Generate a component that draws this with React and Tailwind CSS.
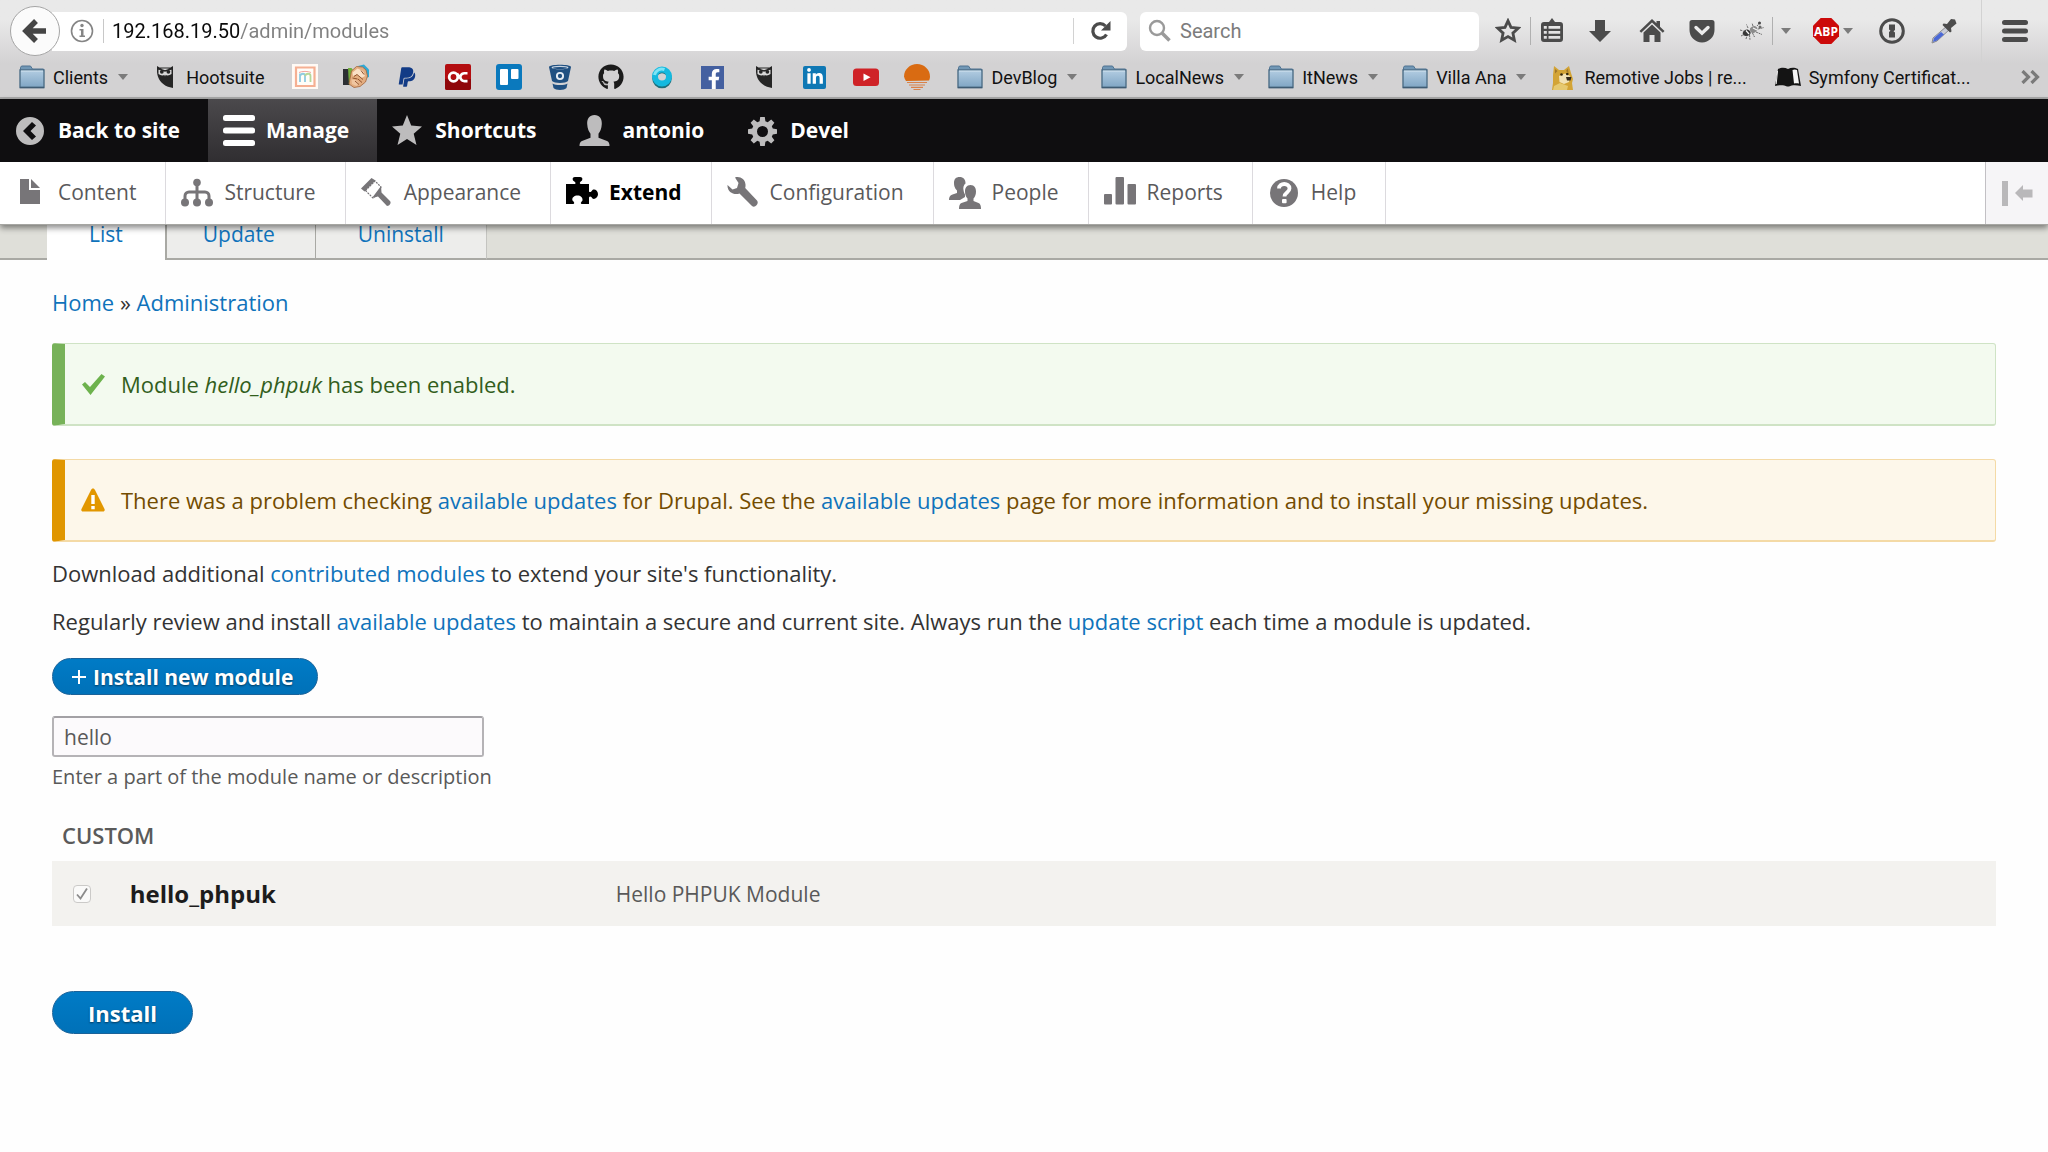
import React from "react";
import { FaGithub, FaPaypal, FaFacebookF, FaLinkedinIn } from "react-icons/fa";

/* ---------- small drawing helpers ---------- */

function Svg({ size = 26, box = 26, className = "", children }) {
  return (
    <svg
      width={size}
      height={size}
      viewBox={`0 0 ${box} ${box}`}
      fill="currentColor"
      aria-hidden="true"
      className={`block shrink-0 ${className}`}
    >
      {children}
    </svg>
  );
}

function Caret() {
  return (
    <svg width="10" height="6" viewBox="0 0 10 6" aria-hidden="true" className="block shrink-0">
      <path d="M0 0h10L5 6z" fill="#7b7b7b" />
    </svg>
  );
}

function Separator() {
  return <span className="h-7 w-px shrink-0 bg-[#b0b0b0]" />;
}

/* ---------- bookmark icons ---------- */

function Folder() {
  return (
    <Svg>
      <defs>
        <linearGradient id="folder" x1="0" y1="0" x2="0" y2="1">
          <stop offset="0" stopColor="#b3cde2" />
          <stop offset="1" stopColor="#7fa5c4" />
        </linearGradient>
      </defs>
      <path d="M1.500 6V3.500l1-1.500h9l2 3h11v6h-23z" fill="#7197b5" stroke="#4f7391" strokeWidth="1" />
      <path d="M1 6h24v17.500H1z" fill="url(#folder)" stroke="#4f6f88" strokeWidth="1.4" />
      <path d="M2 7h22" stroke="#d3e4f0" strokeWidth="1" />
      <path d="M1 23.500h24" stroke="#3f5c74" strokeWidth="1.4" />
    </Svg>
  );
}

function Owl() {
  return (
    <Svg>
      <path d="M5 2l2.500 1.500h11L21 2v22l-5-1.200C9.500 20 5.500 15 5 8z" fill="#262626" />
      <path d="M6.500 5.500c2-1.500 11-1.500 13 0v4.500c-2 1.500-4.500 2-6.500.500-2 1.500-4.500 1-6.500-.500z" fill="#d9d9d9" />
      <circle cx="9.800" cy="7.800" r="1.900" fill="#262626" />
      <circle cx="16.400" cy="7.800" r="1.900" fill="#262626" />
      <path d="M5.500 4.500l7.500 2.500 7.500-2.500" stroke="#262626" strokeWidth="1.500" fill="none" />
      <path d="M12 10l1 2.500 1-2.500z" fill="#d9d9d9" />
    </Svg>
  );
}

function MIcon() {
  return (
    <Svg>
      <path d="M0 0h26v25H0z" fill="#fffaf5" />
      <path d="M4 3.500h18.500v18.500H4z" fill="#fffdf8" stroke="#f5b093" strokeWidth="2.200" />
      <path d="M8 18V9.500M8 12c1-3 5-3 5 0v6" stroke="#8fcbe0" strokeWidth="1.800" fill="none" />
      <path d="M13 12c1-3 5.500-3 5.500 0v6" stroke="#b5d79b" strokeWidth="1.800" fill="none" />
      <path d="M7 8.500c3-1.500 9-1.500 12 0" stroke="#f3a6a0" strokeWidth="1" fill="none" />
    </Svg>
  );
}

function Handshake() {
  return (
    <Svg>
      <path d="M0 5h7v16H0z" fill="#2c2f33" />
      <path d="M5 4h3.500l1.500 2-1 13-3 2.500z" fill="#6fae3c" />
      <path d="M15 2l6-1.500 5 5V13l-3 1z" fill="#2fa9d6" />
      <path d="M8.500 7l5-4.500 6 .500 3.500 3 1.500 6-2 6-5.500 4.500-6 1-5-3.500z" fill="#e3ad80" stroke="#a2643b" strokeWidth=".800" />
      <path d="M9.500 8.500l5-4 5.500 2.500 2 5-3.500 2-5-3.500-3.500 1.500z" fill="#fae0c6" />
      <path d="M8.500 15.500l4.500.500 3 3-2.500 3-4.500-2z" fill="#f0c6a0" />
      <path
        d="M11 12.500l3-2 6 5M15 15l4 3.500M12 17l4 3.500M9.500 14l5 1M18 6.500l3 4"
        stroke="#91532f"
        strokeWidth="1"
        fill="none"
      />
    </Svg>
  );
}

function OcIcon() {
  return (
    <Svg>
      <rect width="26" height="26" rx="2" fill="#b30d10" />
      <path d="M0 15h26v9a2 2 0 0 1-2 2H2a2 2 0 0 1-2-2z" fill="#8f070a" />
      <circle cx="8.500" cy="13" r="4.300" fill="none" stroke="#fff" strokeWidth="2.800" />
      <path
        d="M22.500 9.200h-3.200a4 4 0 0 0-3.600 2.300 4 4 0 0 0 3.600 5.600h3.200M12 9.500l5 7"
        fill="none"
        stroke="#fff"
        strokeWidth="2.600"
      />
    </Svg>
  );
}

function TrelloIcon() {
  return (
    <Svg>
      <rect width="26" height="26" rx="3" fill="#0a79bd" />
      <rect x="4" y="5" width="8" height="16" rx="1" fill="#fff" />
      <rect x="15" y="5" width="7.500" height="10" rx="1" fill="#fff" />
    </Svg>
  );
}

function BucketIcon() {
  return (
    <Svg>
      <path d="M2 3c0-3 22-3 22 0l-3 14c-2 2.500-14 2.500-16 0z" fill="#205081" />
      <ellipse cx="13" cy="3.500" rx="8.500" ry="1.700" fill="#c7d4e2" />
      <ellipse cx="13" cy="4" rx="7" ry="1.100" fill="#205081" />
      <circle cx="13" cy="12" r="3.100" fill="none" stroke="#e6edf4" strokeWidth="1.900" />
      <path d="M5.500 19.500c3 2 12 2 15 0l-1 4.500c-2 2.500-11 2.500-13 0z" fill="#205081" />
    </Svg>
  );
}

function RingIcon() {
  return (
    <Svg>
      <circle cx="13" cy="14.500" r="7.500" fill="none" stroke="#1c6f7c" strokeWidth="4.500" />
      <circle cx="13" cy="12.500" r="7" fill="none" stroke="#14b9df" strokeWidth="6" />
      <path d="M5.500 11a7.500 7.500 0 0 1 10-5.500" fill="none" stroke="#7ee4f5" strokeWidth="3" />
    </Svg>
  );
}

function FacebookIcon() {
  return (
    <span className="flex h-[23px] w-[23px] items-end justify-end bg-[#4460a0] text-white">
      <FaFacebookF size={20} className="block" />
    </span>
  );
}

function LinkedinIcon() {
  return (
    <span className="flex h-[23px] w-[23px] items-center justify-center rounded-[2px] bg-[#0f78b4] text-white">
      <FaLinkedinIn size={18} className="block" />
    </span>
  );
}

function VideoIcon() {
  return (
    <Svg>
      <rect x="0" y="4.500" width="26" height="17.500" rx="3.500" fill="#cf2227" />
      <path d="M10.500 9.500l7 3.700-7 3.700z" fill="#fff" />
    </Svg>
  );
}

function SunsetIcon() {
  return (
    <Svg>
      <path d="M2 17A13 13 0 0 1 0 12.500C0 5.500 6 0 13 0s13 5.500 13 12.500c0 1.500-.500 3-1 4z" fill="#d96b12" />
      <path d="M3 18.500h20M5 21h16M7 23.300h12M9.500 25.500h7" stroke="#d9824a" strokeWidth="1.200" />
    </Svg>
  );
}

function DogeIcon() {
  return (
    <Svg>
      <path d="M3 11L4 2l5 4h5l5-4 2 7 2 6-1 4 1 7H2l1-7z" fill="#d3a436" />
      <path d="M9 12l6-2.500 5 2.500-1 6-5 2-4.500-2z" fill="#f2e2b5" />
      <path d="M5 5l2.500 2L5 9.500zM18 4.500L16 7l2.500 2z" fill="#a0772a" />
      <circle cx="11.500" cy="10.500" r="1.300" fill="#33270f" />
      <circle cx="17.300" cy="10" r="1.300" fill="#33270f" />
      <path d="M16 13h5.500l-1 3.500h-3.500z" fill="#332a1c" />
      <path d="M4 22l6-3 8 3-1 4H3z" fill="#e6c970" />
    </Svg>
  );
}

function BookIcon() {
  return (
    <Svg>
      <path d="M3 5c4-2 7-1.500 10 0 3-1.500 6-2 10 0l3 17c-5-1-9-1-12 .500h-2C9 21 5 21 0 22z" fill="#141414" />
      <path d="M17.500 6c1.500-.700 3-.700 4.500 0l2 13.500c-2-.300-3.500-.300-5 0z" fill="#f4f4f4" />
      <path d="M2.500 7L1.200 20" stroke="#f0f0f0" strokeWidth="1" />
    </Svg>
  );
}

/* ---------- browser chrome ---------- */

const siteBookmarks = [
  ["Mautic", <MIcon />],
  ["Deals", <Handshake />],
  ["PayPal", <FaPaypal size={22} className="block text-[#123b86]" />],
  ["OC", <OcIcon />],
  ["Trello", <TrelloIcon />],
  ["Bitbucket", <BucketIcon />],
  ["GitHub", <FaGithub size={26} className="block text-[#1b1b1b]" />],
  ["Ring", <RingIcon />],
  ["Facebook", <FacebookIcon />],
  ["Hootsuite feed", <Owl />],
  ["LinkedIn", <LinkedinIcon />],
  ["YouTube", <VideoIcon />],
  ["Sunset", <SunsetIcon />],
];

const folders = ["DevBlog", "LocalNews", "ItNews", "Villa Ana"];

function FolderButton({ label }) {
  return (
    <button type="button" className="flex items-center">
      <Folder />
      <span className="ml-2 mr-[10px]">{label}</span>
      <Caret />
    </button>
  );
}

function ToolButton({ label, className, children }) {
  return (
    <button
      type="button"
      aria-label={label}
      className={`flex shrink-0 items-center justify-center text-[#4b4b4b] ${className}`}
    >
      {children}
    </button>
  );
}

function NavigationBar() {
  return (
    <div className="flex h-[62px] items-center pl-[10px] pr-5 font-[Roboto,sans-serif] text-xl">
      <button
        type="button"
        aria-label="Back"
        className="relative z-10 flex h-[50px] w-[50px] shrink-0 items-center justify-center rounded-full border border-[#a5a5a5] bg-[#fbfbfb] text-[#454545]"
      >
        <Svg>
          <path d="M14 3L4 13l10 10M5 13h19" fill="none" stroke="currentColor" strokeWidth="5.500" />
        </Svg>
      </button>
      <div className="-ml-2 flex h-[39px] min-w-0 flex-1 items-center rounded-r-md bg-white pl-[18px]">
        <button type="button" aria-label="Site information" className="text-[#858585]">
          <Svg size={24} box={24}>
            <circle cx="12" cy="12" r="10.500" fill="none" stroke="currentColor" strokeWidth="1.600" />
            <circle cx="12" cy="6.500" r="1.700" />
            <path d="M9.500 10h4v6.500H15V18H9.500v-1.500H11v-5H9.500z" />
          </Svg>
        </button>
        <span className="ml-[9px] mr-2 h-6 w-px bg-[#c8c8c8]" />
        <input
          aria-label="Address"
          type="text"
          defaultValue="192.168.19.50/admin/modules"
          className="min-w-0 flex-1 bg-[linear-gradient(to_right,#0a0a0a_128px,#808080_128px)] bg-clip-text text-transparent outline-none"
        />
        <span className="h-[26px] w-px bg-[#d2d2d2]" />
        <button type="button" aria-label="Reload" className="flex w-[53px] justify-center text-[#4b4b4b]">
          <Svg size={22} box={22}>
            <path d="M16.500 14.500A7.300 7.300 0 1 1 15.500 6" fill="none" stroke="currentColor" strokeWidth="3.200" />
            <path d="M20.500 1v9.500H11z" />
          </Svg>
        </button>
      </div>
      <label className="ml-[13px] flex h-[39px] w-[339px] items-center rounded-md bg-white pl-2">
        <Svg size={24} box={24} className="text-[#9a9a9a]">
          <circle cx="9" cy="9" r="7" fill="none" stroke="currentColor" strokeWidth="2.400" />
          <path d="M14 14l7.500 7.500" stroke="currentColor" strokeWidth="3.600" />
        </Svg>
        <input
          type="search"
          aria-label="Search"
          placeholder="Search"
          className="ml-2 min-w-0 flex-1 outline-none placeholder:text-[#7c7c7c]"
        />
      </label>
      <ToolButton label="Bookmark this page" className="ml-4 mr-[9px]">
        <Svg>
          <path
            d="M13 2.800l3 6.600 7.200.800-5.300 4.900 1.500 7.100-6.400-3.600-6.400 3.600 1.500-7.100-5.300-4.900 7.200-.800z"
            fill="none"
            stroke="currentColor"
            strokeWidth="2.800"
          />
        </Svg>
      </ToolButton>
      <Separator />
      <ToolButton label="Library" className="ml-2">
        <Svg>
          <path
            fillRule="evenodd"
            d="M5 4h5l3-4 3 4h5a3 3 0 0 1 3 3v14a3 3 0 0 1-3 3H5a3 3 0 0 1-3-3V7a3 3 0 0 1 3-3zm-.200 4v2.700h3V8zm4.700 0v2.700h11.700V8zm-4.700 5v2.700h3V13zm4.700 0v2.700h11.700V13zm-4.700 5v2.700h3V18zm4.700 0v2.700h11.700V18z"
          />
        </Svg>
      </ToolButton>
      <ToolButton label="Downloads" className="ml-[22px]">
        <Svg>
          <path d="M8 2h10v11h6L13 24 2 13h6z" />
        </Svg>
      </ToolButton>
      <ToolButton label="Home" className="ml-[26px]">
        <Svg>
          <path d="M13 1l4.500 4.300V3H21v5.700l4.500 4.300-1.700 1.700L13 4.500 2.200 14.700.500 13z" />
          <path d="M13 6.500l8.500 8V24h-6v-7h-5v7h-6v-9.500z" />
        </Svg>
      </ToolButton>
      <ToolButton label="Pocket" className="ml-6">
        <Svg>
          <path d="M3 2h20a2.500 2.500 0 0 1 2.500 2.500V12a12.500 12.500 0 0 1-25 0V4.500A2.500 2.500 0 0 1 3 2z" />
          <path d="M7 9.500l6 5.700 6-5.700" fill="none" stroke="#ececec" strokeWidth="3.400" strokeLinecap="round" />
        </Svg>
      </ToolButton>
      <ToolButton label="Firebug" className="ml-6 mr-[7px]">
        <Svg>
          <path d="M4 14c1.500-3 5-3.500 7-1s-1 5-3.500 5S3 17 4 14z" fill="#383838" />
          <path d="M11 10.500c2-3 5.500-3.500 7-1s-1.500 5-3.500 5.500-4-2-3.500-4.500z" fill="#8b8b8b" />
          <path
            d="M1 12l3.500 1M2 18l3-1.500M7 21l1-3.500M9 10L7.500 6.500M14 8l-1-3M18 8l3-3.500M19 11l6-1.500M17 14l6 2.500M13.500 15l2 4M10.500 17l.500 5"
            stroke="#6a6a6a"
            strokeWidth="1"
            strokeDasharray="2 .8"
            fill="none"
          />
          <path d="M14 10l4 2M7 12.500l3 3.500" stroke="#f5f5f5" strokeWidth="1.200" />
          <circle cx="20.500" cy="5" r="1.500" fill="#4a4a4a" />
          <circle cx="21" cy="9" r="1.500" fill="#6a6a6a" />
        </Svg>
      </ToolButton>
      <Separator />
      <ToolButton label="Firebug options" className="ml-2">
        <Caret />
      </ToolButton>
      <ToolButton label="Adblock Plus" className="ml-[22px]">
        <Svg>
          <path d="M7.700 0h10.600L26 7.700v10.600L18.300 26H7.700L0 18.300V7.700z" fill="#cc0a0a" />
          <text
            x="13"
            y="17.500"
            textAnchor="middle"
            fontFamily="Open Sans, sans-serif"
            fontWeight="700"
            fontSize="12"
            fill="#fff"
          >
            ABP
          </text>
        </Svg>
      </ToolButton>
      <ToolButton label="Adblock Plus options" className="ml-1">
        <Caret />
      </ToolButton>
      <ToolButton label="1Password" className="ml-[26px]">
        <Svg>
          <circle cx="13" cy="13" r="11.300" fill="none" stroke="currentColor" strokeWidth="3" />
          <path d="M10 6.500h6v5.500l-1.500 1.300 1.500 1.200v5h-6V14l1.500-1.300L10 11.500z" />
        </Svg>
      </ToolButton>
      <ToolButton label="Color picker" className="ml-[26px] mr-6">
        <Svg>
          <path d="M16 8l3 3L6 23l-5 2 1-5z" fill="#c9ccd6" stroke="#8a8a8f" strokeWidth="1" />
          <path d="M10 14l3 2.500L6 22.500l-4 1.500 1-4z" fill="#4a68d6" />
          <path d="M12.500 5.500L16 6l4-5 4 .500 1.500 4L20 10l.500 3.500-1.500 1-7.500-7.500z" fill="#4c4c4c" />
        </Svg>
      </ToolButton>
      <span className="h-full w-px bg-[#d2d2d2]" />
      <ToolButton label="Open menu" className="ml-5">
        <Svg>
          <rect x="0" y="2" width="26" height="5" rx="2.500" />
          <rect x="0" y="10.500" width="26" height="5" rx="2.500" />
          <rect x="0" y="19" width="26" height="5" rx="2.500" />
        </Svg>
      </ToolButton>
    </div>
  );
}

function BookmarksBar() {
  return (
    <div className="flex h-[30px] items-center whitespace-nowrap pl-[19px] pr-[7px] font-[Roboto,sans-serif] text-[18px] text-[#111]">
      <FolderButton label="Clients" />
      <a href="#hootsuite" className="ml-6 mr-[15px] flex items-center gap-2">
        <Owl />
        Hootsuite
      </a>
      {siteBookmarks.map(([name, icon]) => (
        <a
          key={name}
          href={`#${name.toLowerCase().replace(" ", "-")}`}
          aria-label={name}
          className="flex w-[51px] shrink-0 justify-center"
        >
          {icon}
        </a>
      ))}
      <div className="ml-[15px] flex items-center gap-6">
        {folders.map((label) => (
          <FolderButton key={label} label={label} />
        ))}
        <a href="#remotive" className="mr-1 flex items-center gap-2">
          <DogeIcon />
          Remotive Jobs | re...
        </a>
        <a href="#symfony" className="flex items-center gap-2">
          <BookIcon />
          Symfony Certificat...
        </a>
      </div>
      <button type="button" aria-label="More bookmarks" className="ml-auto text-[#7a7a7a]">
        <svg width="20" height="14" viewBox="0 0 20 14" aria-hidden="true" className="block">
          <path
            d="M1.500 1l6 6-6 6M10.500 1l6 6-6 6"
            fill="none"
            stroke="currentColor"
            strokeWidth="3.200"
          />
        </svg>
      </button>
    </div>
  );
}

/* ---------- admin toolbar ---------- */

const toolbarItems = [
  {
    label: "Back to site",
    icon: (
      <Svg size={32} box={32}>
        <path
          fillRule="evenodd"
          d="M15 2a14 14 0 1 0 0 28 14 14 0 0 0 0-28zM17 7l4 3.500-5.500 5.500 5.500 5.500L17 25l-9-9z"
        />
      </Svg>
    ),
  },
  {
    label: "Manage",
    active: true,
    icon: (
      <Svg size={32} box={32}>
        <rect x="0" y="0" width="32" height="6" rx="2.500" />
        <rect x="0" y="12.500" width="32" height="6" rx="2.500" />
        <rect x="0" y="25" width="32" height="6" rx="2.500" />
      </Svg>
    ),
  },
  {
    label: "Shortcuts",
    icon: (
      <Svg size={32} box={32}>
        <path d="M15 0l4.200 10.500L30 11.500l-8.300 7.300L24.500 30 15 24l-9.500 6 2.800-11.200L0 11.500l10.800-1z" />
      </Svg>
    ),
  },
  {
    label: "antonio",
    icon: (
      <Svg size={32} box={32}>
        <path d="M15.500 0c5 0 7.500 3.600 7.300 9-.200 4.500-1.800 8-3.300 9.700v4l8.500 3.300c2 .900 2.500 2.500 2.500 5H.500c0-2.500.500-4.100 2.500-5l8.500-3.300v-4C10 17 8.400 13.500 8.200 9 8 3.600 10.500 0 15.500 0z" />
      </Svg>
    ),
  },
  {
    label: "Devel",
    icon: (
      <Svg size={32} box={32}>
        <path
          fillRule="evenodd"
          d="M13.200 2h4.600l.6 4.200 2.300 1 3.500-2.600 3.200 3.200-2.600 3.500 1 2.300 4.200.600v4.600l-4.200.600-1 2.300 2.600 3.500-3.200 3.200-3.500-2.600-2.300 1-.6 4.200h-4.600l-.6-4.200-2.300-1-3.500 2.600-3.200-3.200 2.600-3.500-1-2.300L1 18.800v-4.600l4.200-.600 1-2.300-2.600-3.500 3.200-3.200 3.500 2.600 2.300-1zM15.500 11a5.500 5.500 0 1 0 0 11 5.500 5.500 0 0 0 0-11z"
        />
      </Svg>
    ),
  },
];

const trayItems = [
  {
    label: "Content",
    icon: (
      <Svg size={32} box={32}>
        <path d="M5 2h9v11h11v14H5z" />
        <path d="M16 2l9 9h-9z" />
      </Svg>
    ),
  },
  {
    label: "Structure",
    icon: (
      <Svg size={32} box={32}>
        <circle cx="16" cy="5.500" r="3.800" />
        <path
          d="M16 6v18M4 25v-6a4 4 0 0 1 4-4h16a4 4 0 0 1 4 4v6"
          fill="none"
          stroke="currentColor"
          strokeWidth="3"
        />
        <circle cx="4" cy="25.500" r="4" />
        <circle cx="16" cy="25.500" r="4" />
        <circle cx="28" cy="25.500" r="4" />
      </Svg>
    ),
  },
  {
    label: "Appearance",
    icon: (
      <Svg size={32} box={32}>
        <path d="M0 11.500L10.500 1l4 2.500L3.500 14.500z" />
        <path
          d="M4.500 13.500L14 4l6 6-1.500 6L12 21z"
          fill="none"
          stroke="currentColor"
          strokeWidth="1.200"
          strokeDasharray="2 1"
        />
        <path d="M20 9l.500 6.500L29 24c1.500 1.500 0 5-3 5l-9-9.500-6 1.500z" />
      </Svg>
    ),
  },
  {
    label: "Extend",
    active: true,
    icon: (
      <Svg size={32} box={32}>
        <path d="M0 7h9c1.500-1 0-2-2-3.500C6 1.500 7 0 9 0h5c2 0 3 1.500 2 3.500C14 5 13 6 14.500 7H23v7.500c1 1.500 2.500 0 3.500-1.500 2-1.500 5.500.500 5.500 4s-3.500 6-5.500 4.500c-1-1.500-2.500-3-3.500-1V27h-7.500c-1.500-1 0-2 1-3.500.500-3-2-5-5-5s-6 2-5 5c1.500 1.500 2.500 2.500 1 3.500H0z" />
      </Svg>
    ),
  },
  {
    label: "Configuration",
    icon: (
      <Svg size={32} box={32}>
        <path d="M8 .500c5-1.500 10 1.500 10.500 7 .1 1.500 0 2.500-.3 3.500L30 23.500c2.500 3-2 8-5 5.500L12.500 16.500C7 18.500 0 15 .5 8l5 4.500 4.500-1.500L11.500 6z" />
      </Svg>
    ),
  },
  {
    label: "People",
    icon: (
      <Svg size={32} box={32}>
        <path d="M10.500 0c4 0 6 2.500 6 6.500-2 1.500-2.500 4-2 6.500.3 2 1 3.500 1.500 4.500v2.500L11 23H0c0-3 1-4.500 3.500-5.500L8 16v-2.500C5.500 11 5 8.500 5 6c0-4 2-6 5.500-6z" />
        <path d="M21.500 8c4 0 5.500 3 5.500 6.500 0 3-1 5.500-2.500 7V24l5 2c2 .800 2.500 3 2.500 6H10c0-3 .5-5.200 2.500-6l6-2v-2.500c-1.500-1.500-2.500-4-2.500-7C16 11 17.500 8 21.500 8z" />
      </Svg>
    ),
  },
  {
    label: "Reports",
    icon: (
      <Svg size={32} box={32}>
        <rect x="0" y="17" width="8" height="10.500" rx="1" />
        <rect x="11.500" y="0" width="8.500" height="27.500" rx="1" />
        <rect x="23.500" y="7" width="8.500" height="20.500" rx="1" />
      </Svg>
    ),
  },
  {
    label: "Help",
    icon: (
      <Svg size={32} box={32}>
        <circle cx="16" cy="16" r="14" />
        <path
          d="M11 11.500c0-6 10.500-6 10.500 0 0 4-5 4-5 8"
          fill="none"
          stroke="#fff"
          strokeWidth="3.800"
        />
        <rect x="14" y="22" width="4.600" height="4.200" rx="1" fill="#fff" />
      </Svg>
    ),
  },
];

function AdminToolbar() {
  return (
    <nav aria-label="Toolbar" className="relative z-10 text-[21px] shadow-[0_3px_6px_rgba(0,0,0,0.45)]">
      <div className="flex h-[63px] bg-[#0f0e10]">
        {toolbarItems.map(({ label, icon, active }) => (
          <a
            key={label}
            href={`#${label.toLowerCase().replaceAll(" ", "-")}`}
            className={`flex items-center gap-[11px] pl-[15px] pr-7 font-bold text-white ${
              active ? "bg-linear-to-b from-[#4b494c] to-[#302e31]" : ""
            }`}
          >
            <span className={active ? "text-white" : "text-[#bdbcbd]"}>{icon}</span>
            {label}
          </a>
        ))}
      </div>
      <div className="flex h-[63px] border-b border-[#a6a6a2] bg-white">
        {trayItems.map(({ label, icon, active }) => (
          <a
            key={label}
            href={`#${label.toLowerCase()}`}
            className={`flex items-center gap-[11px] border-r border-[#dcdade] pl-[15px] pr-[29px] ${
              active ? "font-bold text-black" : "text-[#5a595b]"
            }`}
          >
            <span className={active ? "text-black" : "text-[#777578]"}>{icon}</span>
            {label}
          </a>
        ))}
        <button
          type="button"
          aria-label="Vertical orientation"
          className="ml-auto flex w-[63px] items-center justify-center border-l border-[#c2c0c4] bg-[#f6f5f7] text-[#b9b8ba]"
        >
          <Svg size={32} box={32}>
            <rect x="1" y="4" width="6" height="25" />
            <path d="M14 16l8-8v4.500h9.500v8H22V24z" />
          </Svg>
        </button>
      </div>
    </nav>
  );
}

/* ---------- page ---------- */

function Link({ children }) {
  return (
    <a href="#link" className="text-[#0f73bb]">
      {children}
    </a>
  );
}

function Tabs() {
  return (
    <nav
      aria-label="Primary tabs"
      className="flex h-[35px] bg-[#dfdfd9] pl-[47px] text-[21px] leading-[18px] text-[#0f73bb] shadow-[inset_0_-2px_0_#a9a9a4]"
    >
      <a href="#list" className="bg-white px-[42px]">
        List
      </a>
      <a href="#update" className="border-b-2 border-l-2 border-[#a9a9a4] bg-[#ededeb] pl-9 pr-10">
        Update
      </a>
      <a href="#uninstall" className="border-x border-b-2 border-[#a9a9a4] border-r-[#c4c4c0] bg-[#ededeb] px-[42px]">
        Uninstall
      </a>
    </nav>
  );
}

export default function App() {
  return (
    <div className="min-h-screen bg-[#fefefe] font-['Open_Sans','Noto_Sans',sans-serif] text-[#333]">
      <header className="border-b-2 border-[#a9a9a9] bg-linear-to-b from-[#e9e9e9] from-20% to-[#d3d2d3] to-65% pb-[5px]">
        <NavigationBar />
        <BookmarksBar />
      </header>
      <AdminToolbar />
      <Tabs />

      <main className="px-[52px] pb-10 text-[22px] leading-[30px]">
        <nav aria-label="Breadcrumb" className="mt-[27px]">
          <Link>Home</Link> » <Link>Administration</Link>
        </nav>

        <div
          role="status"
          className="mt-[26px] flex items-center rounded-[3px] border border-b-2 border-l-[13px] border-[#cfe3c5] border-l-[#77b259] bg-[#f3faef] py-[25px] pl-4 text-[#325e1c]"
        >
          <Svg size={24} box={24} className="mr-4 text-[#6db24d]">
            <path d="M1 12.500l3-2.500 5 5L20.500 2 24 4.500 9.500 23z" />
          </Svg>
          <p>
            Module <em>hello_phpuk</em> has been enabled.
          </p>
        </div>

        <div
          role="alert"
          className="mt-[33px] flex items-center rounded-[3px] border border-b-2 border-l-[13px] border-[#f4daa6] border-l-[#e09600] bg-[#fdf7ea] py-[25px] pl-4 text-[#734c00]"
        >
          <Svg size={24} box={24} className="mr-4 text-[#e29700]">
            <path d="M12 .500c1 0 1.600.700 2 1.500l9.500 19c.600 1.300 0 2.500-1.500 2.500H2c-1.500 0-2.100-1.200-1.500-2.500L10 2c.400-.800 1-1.500 2-1.500z" />
            <path d="M10.300 7h3.400v9h-3.400zM10.300 18h3.400v3.200h-3.400z" fill="#fff" />
          </Svg>
          <p>
            There was a problem checking <Link>available updates</Link> for Drupal. See the{" "}
            <Link>available updates</Link> page for more information and to install your missing updates.
          </p>
        </div>

        <p className="mt-4">
          Download additional <Link>contributed modules</Link> to extend your site's functionality.
        </p>
        <p className="mt-[18px]">
          Regularly review and install <Link>available updates</Link> to maintain a secure and current site. Always
          run the <Link>update script</Link> each time a module is updated.
        </p>

        <button
          type="button"
          className="mt-[22px] flex h-[37px] items-center gap-[7px] rounded-full border border-[#1a6299] bg-linear-to-b from-[#007bc6] to-[#0071b8] pl-[19px] pr-6 text-[21px] font-bold text-white [text-shadow:0_1px_2px_rgba(0,0,0,0.5)]"
        >
          <Svg size={14} box={14}>
            <path d="M6 0h2v6h6v2H8v6H6V8H0V6h6z" />
          </Svg>
          Install new module
        </button>

        <form className="mt-[21px]" onSubmit={(e) => e.preventDefault()}>
          <input
            type="text"
            aria-label="Filter modules"
            aria-describedby="filter-help"
            defaultValue="hello"
            className="block h-[41px] w-[432px] rounded-[3px] border-2 border-[#b5b3b6] border-t-[#a3a1a5] bg-[#fcfafc] px-[10px] text-[21px] text-[#595959] outline-none"
          />
          <p id="filter-help" className="mt-[5px] text-[20px] text-[#595959]">
            Enter a part of the module name or description
          </p>

          <table className="mt-7 w-full table-fixed">
            <caption className="mb-[11px] pl-[10px] text-left font-semibold text-[#5a5a5a]">CUSTOM</caption>
            <colgroup>
              <col className="w-[4%]" />
              <col className="w-[25%]" />
              <col />
            </colgroup>
            <tbody>
              <tr className="h-[65px] bg-[#f3f2ef]">
                <td className="pl-[21px]">
                  <span className="grid h-[18px] w-[18px] place-items-center">
                    <input
                      id="hello-phpuk"
                      type="checkbox"
                      defaultChecked
                      disabled
                      className="col-start-1 row-start-1 h-[18px] w-[18px] appearance-none rounded-[4px] border border-[#cbcac8] bg-[#fafaf9]"
                    />
                    <Svg size={14} box={14} className="pointer-events-none col-start-1 row-start-1 text-[#8b8b8b]">
                      <path d="M2 7.500L5.500 11.500 12 1.500" fill="none" stroke="currentColor" strokeWidth="1.800" />
                    </Svg>
                  </span>
                </td>
                <td>
                  <label htmlFor="hello-phpuk" className="text-[24px] font-bold text-[#1c1c1c]">
                    hello_phpuk
                  </label>
                </td>
                <td className="text-[21px] text-[#595959]">Hello PHPUK Module</td>
              </tr>
            </tbody>
          </table>

          <button
            type="submit"
            className="mt-[65px] flex h-[43px] items-center rounded-full border border-[#1a6299] bg-linear-to-b from-[#007bc6] to-[#0071b8] px-[35px] font-bold text-white [text-shadow:0_1px_2px_rgba(0,0,0,0.5)]"
          >
            Install
          </button>
        </form>
      </main>
    </div>
  );
}
